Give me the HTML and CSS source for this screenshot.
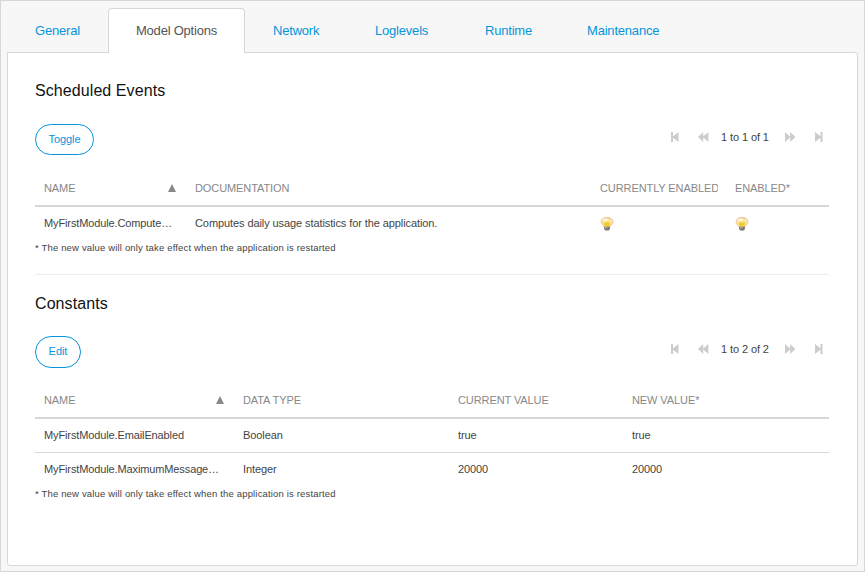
FILE: index.html
```
<!DOCTYPE html>
<html lang="en">
<head>
<meta charset="utf-8">
<title>Model Options</title>
<link rel="stylesheet" href="styles.css">
</head>
<body>
<svg class="defs" width="0" height="0" aria-hidden="true">
  <defs>
    <radialGradient id="glass" cx="48%" cy="68%" r="66%">
      <stop offset="0" stop-color="#f3cb30"/>
      <stop offset=".4" stop-color="#fbe07c"/>
      <stop offset=".8" stop-color="#fdebb8"/>
      <stop offset="1" stop-color="#f2c08a"/>
    </radialGradient>
    <symbol id="bulb" viewBox="0 0 13 14">
      <path d="M6.500.5C3 .5.6 2.400.6 4.900c0 2.200 1.900 2.900 2.800 4.900h6.200c.9-2 2.800-2.700 2.800-4.900C12.400 2.400 10 .5 6.500.5z" fill="url(#glass)" stroke="#ecb680" stroke-width=".8"/>
      <path d="M3.800 5.800h5.400v3.600H3.800z" fill="#ecc428" opacity=".7"/>
      <ellipse cx="5" cy="3" rx="2.600" ry="1.400" fill="#fffbe8" opacity=".8"/>
      <path d="M3.600 9.800h5.800v2.500l-1.400 1.300H5l-1.400-1.300z" fill="#77756f"/>
      <path d="M4.300 10.900h2.700" stroke="#cfcdc4" stroke-width=".8"/>
    </symbol>
    <symbol id="first" viewBox="0 0 8 10"><path d="M0 0h2v4.300L7.500 0v10L2 5.700V10H0z"/></symbol>
    <symbol id="prev" viewBox="0 0 11 10"><path d="M0 5l5.200-5v4.600L10.400 0v10L5.200 5.400V10z"/></symbol>
    <symbol id="next" viewBox="0 0 11 10"><path d="M10.400 5L5.200 0v4.600L0 0v10l5.200-4.600V10z"/></symbol>
    <symbol id="last" viewBox="0 0 8 10"><path d="M7.500 0h-2v4.300L0 0v10l5.500-4.300V10h2z"/></symbol>
  </defs>
</svg>
<div class="frame">
  <nav class="tabs">
    <a class="tab tab-general">General</a>
    <a class="tab active">Model Options</a>
    <a class="tab tab-network">Network</a>
    <a class="tab tab-loglevels">Loglevels</a>
    <a class="tab tab-runtime">Runtime</a>
    <a class="tab">Maintenance</a>
  </nav>
  <main class="panel">
    <section class="events">
      <h2>Scheduled Events</h2>
      <div class="toolbar">
        <button class="btn toggle">Toggle</button>
        <div class="pager">
          <svg class="edge"><use href="#first"/></svg>
          <svg class="step"><use href="#prev"/></svg>
          <span>1 to 1 of 1</span>
          <svg class="step"><use href="#next"/></svg>
          <svg class="edge"><use href="#last"/></svg>
        </div>
      </div>
      <div class="grid">
        <div class="row head">
          <div class="cell sorted"><span>NAME</span><i class="arrow"></i></div>
          <div class="cell">DOCUMENTATION</div>
          <div class="cell">CURRENTLY ENABLED</div>
          <div class="cell">ENABLED*</div>
        </div>
        <div class="row">
          <div class="cell name">MyFirstModule.Compute…</div>
          <div class="cell">Computes daily usage statistics for the application.</div>
          <div class="cell"><svg class="bulb"><use href="#bulb"/></svg></div>
          <div class="cell"><svg class="bulb"><use href="#bulb"/></svg></div>
        </div>
      </div>
      <p class="note">* The new value will only take effect when the application is restarted</p>
    </section>
    <section class="constants">
      <h2>Constants</h2>
      <div class="toolbar">
        <button class="btn edit">Edit</button>
        <div class="pager">
          <svg class="edge"><use href="#first"/></svg>
          <svg class="step"><use href="#prev"/></svg>
          <span>1 to 2 of 2</span>
          <svg class="step"><use href="#next"/></svg>
          <svg class="edge"><use href="#last"/></svg>
        </div>
      </div>
      <div class="grid">
        <div class="row head">
          <div class="cell sorted"><span>NAME</span><i class="arrow"></i></div>
          <div class="cell">DATA TYPE</div>
          <div class="cell">CURRENT VALUE</div>
          <div class="cell">NEW VALUE*</div>
        </div>
        <div class="row ruled">
          <div class="cell name">MyFirstModule.EmailEnabled</div>
          <div class="cell">Boolean</div>
          <div class="cell">true</div>
          <div class="cell">true</div>
        </div>
        <div class="row">
          <div class="cell name">MyFirstModule.MaximumMessage…</div>
          <div class="cell">Integer</div>
          <div class="cell">20000</div>
          <div class="cell">20000</div>
        </div>
      </div>
      <p class="note">* The new value will only take effect when the application is restarted</p>
    </section>
  </main>
</div>
</body>
</html>
```
FILE: styles.css
```
* { box-sizing: border-box; }
body {
  margin: 0;
  font-family: "Liberation Sans", Arial, sans-serif;
  font-size: 11px;
  color: #444;
}
.defs { display: block; }
.frame {
  width: 865px;
  height: 572px;
  padding: 7px 6px 0;
  border: 1px solid #d7d7d7;
  background: #f7f7f7;
}
.tabs {
  display: flex;
  height: 45px;
  margin-bottom: -1px;
}
.tab {
  padding: 0 28px;
  height: 44px;
  line-height: 45px;
  font-size: 13px;
  letter-spacing: -0.2px;
  white-space: nowrap;
  color: #0595db;
}
.tab-general { width: 101px; }
.tab-network { width: 102px; }
.tab-loglevels { width: 110px; }
.tab-runtime { width: 102px; }
.tab.active {
  width: 137px;
  height: 45px;
  padding: 0 27px;
  line-height: 43px;
  letter-spacing: -0.22px;
  border: 1px solid #d7d7d7;
  border-bottom: 0;
  border-radius: 4px 4px 0 0;
  background: #fff;
  color: #555;
  z-index: 1;
}
.panel {
  width: 851px;
  height: 514px;
  padding: 28px 28px 0 27px;
  border: 1px solid #d7d7d7;
  border-radius: 0 3px 3px 3px;
  background: #fff;
}
h2 {
  margin: 0;
  height: 20px;
  line-height: 20px;
  font-size: 16px;
  font-weight: 400;
  letter-spacing: 0.08px;
  color: #111;
}
.events {
  width: 794px;
  height: 194px;
  border-bottom: 1px solid #ececec;
}
.constants { width: 794px; padding-top: 19px; }
.toolbar {
  display: flex;
  justify-content: space-between;
  align-items: flex-start;
  height: 47px;
  margin-top: 23px;
}
.constants .toolbar { margin-top: 22px; }
.btn {
  padding: 0;
  height: 31px;
  border: 1px solid #0595db;
  border-radius: 16px;
  background: #fff;
  font: 11px/29px "Liberation Sans", Arial, sans-serif;
  letter-spacing: -0.05px;
  color: #0595db;
}
.toggle { width: 59px; }
.edit { width: 46px; height: 32px; padding-bottom: 1px; }
.pager {
  display: flex;
  align-items: center;
  height: 26px;
  margin-right: 6px;
}
.pager span { width: 49px; margin: 0 15px 0 12px; white-space: nowrap; letter-spacing: -0.1px; }
.pager svg { display: block; height: 10px; fill: #ccc; }
.edge { width: 8px; }
.step { width: 11px; }
.edge + .step { margin-left: 19px; }
.step + .edge { margin-left: 19px; }
.row {
  display: grid;
  grid-template-columns: 151px 405px 135px 103px;
  height: 33px;
  line-height: 33px;
  letter-spacing: -0.09px;
}
.constants .row { grid-template-columns: 199px 215px 174px 206px; }
.constants .ruled { height: 34px; border-bottom: 1px solid #d7d7d7; }
.row.head {
  height: 36px;
  line-height: 34px;
  border-bottom: 2px solid #d7d7d7;
  color: #888;
}
.cell {
  margin: 0 8px 0 9px;
  overflow: hidden;
  white-space: nowrap;
}
.name { letter-spacing: -0.12px; }
.sorted { display: flex; justify-content: space-between; align-items: center; margin-right: 10px; }
.arrow {
  border: 4px solid transparent;
  border-top: 0;
  border-bottom: 8px solid #888;
}
.bulb { display: block; width: 14px; height: 14px; margin-top: 10px; }
.note {
  margin: 0;
  height: 15px;
  line-height: 15px;
  font-size: 9.500px;
  letter-spacing: 0.165px;
}
```
